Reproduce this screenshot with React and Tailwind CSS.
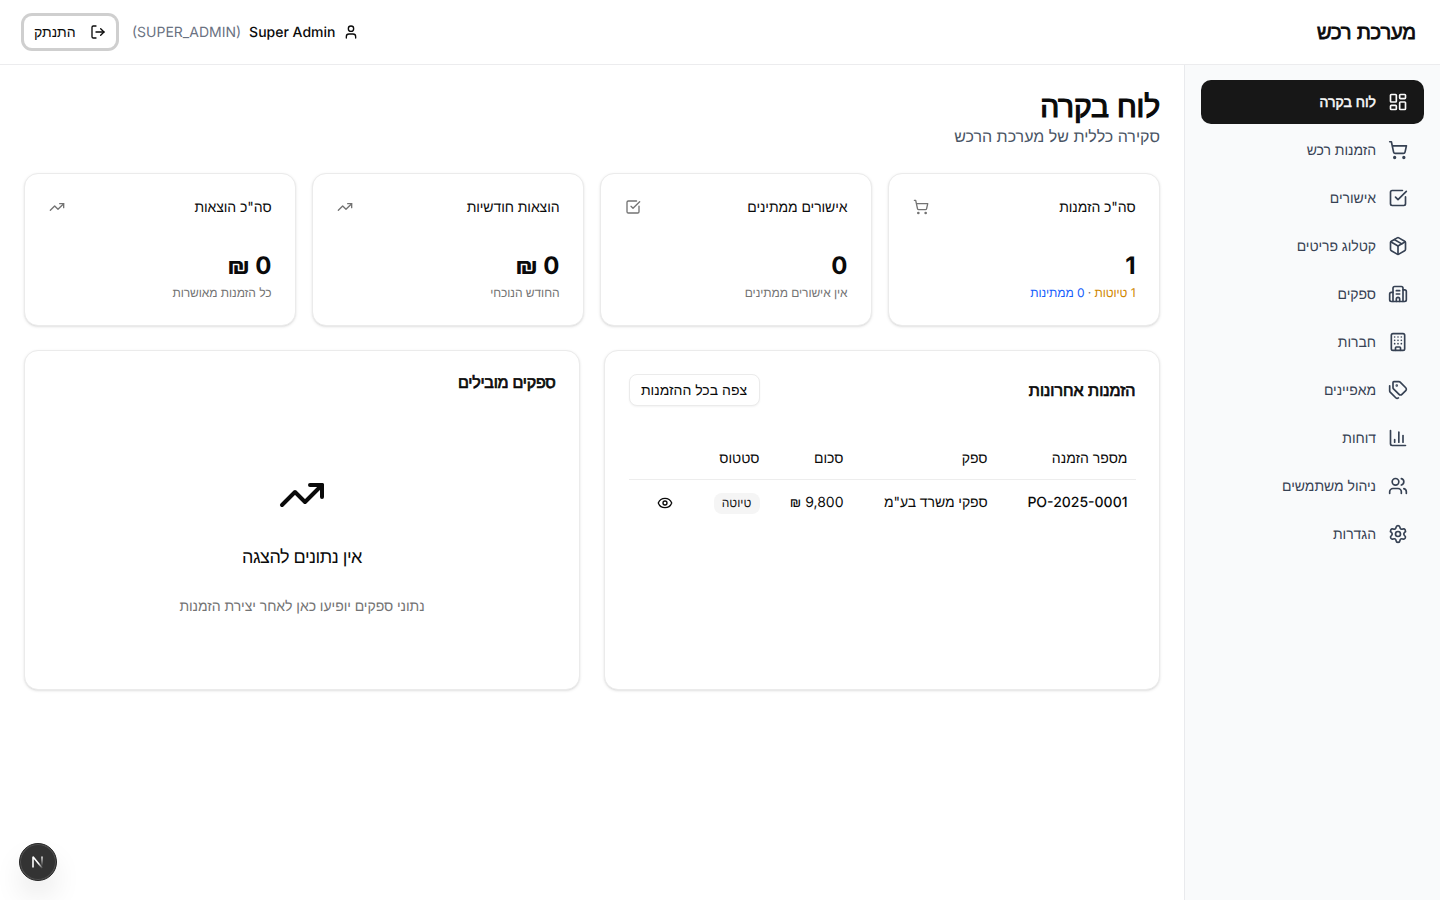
import {
  LayoutDashboard,
  ShoppingCart,
  SquareCheckBig,
  Package,
  Building2,
  Building,
  Tags,
  ChartColumn,
  Users,
  Settings,
  LogOut,
  User,
  TrendingUp,
  Eye,
} from 'lucide-react';

const NAV = [
  { label: 'לוח בקרה', icon: LayoutDashboard, active: true },
  { label: 'הזמנות רכש', icon: ShoppingCart },
  { label: 'אישורים', icon: SquareCheckBig },
  { label: 'קטלוג פריטים', icon: Package },
  { label: 'ספקים', icon: Building2 },
  { label: 'חברות', icon: Building },
  { label: 'מאפיינים', icon: Tags },
  { label: 'דוחות', icon: ChartColumn },
  { label: 'ניהול משתמשים', icon: Users },
  { label: 'הגדרות', icon: Settings },
];

const STATS = [
  {
    title: 'סה"כ הזמנות',
    icon: ShoppingCart,
    value: '1',
    note: (
      <>
        <span className="text-[#d08700]">1 טיוטות</span> · <span className="text-[#155dfc]">0 ממתינות</span>
      </>
    ),
  },
  { title: 'אישורים ממתינים', icon: SquareCheckBig, value: '0', note: 'אין אישורים ממתינים' },
  { title: 'הוצאות חודשיות', icon: TrendingUp, value: '0 ₪', note: 'החודש הנוכחי' },
  { title: 'סה"כ הוצאות', icon: TrendingUp, value: '0 ₪', note: 'כל הזמנות מאושרות' },
];

function Header() {
  return (
    <header className="flex h-[65px] shrink-0 items-center justify-between border-b border-[#ececee] bg-white px-6">
      <h1 className="text-xl font-normal tracking-[-0.1px] [-webkit-text-stroke:0.8px_currentColor]">מערכת רכש</h1>
      <div className="flex items-center gap-4">
        <div className="flex items-center gap-2 text-sm">
          <User className="size-4" />
          <span className="pt-px font-medium">Super Admin</span>
          <span dir="ltr" className="pt-px text-[#6a7282]">(SUPER_ADMIN)</span>
        </div>
        <button className="flex h-8 w-[92px] items-center justify-between rounded-lg bg-white px-2.5 text-sm ring-3 ring-[#cfcfcf]">
          <LogOut className="size-4" />
          התנתק
        </button>
      </div>
    </header>
  );
}

function Sidebar() {
  return (
    <aside className="w-64 shrink-0 border-l border-[#e9eaed] bg-[#f9fafb] px-4 pt-[15px]">
      <nav className="flex flex-col gap-1">
        {NAV.map(({ label, icon: Icon, active }) => (
          <a
            key={label}
            className={
              active
                ? 'flex h-11 items-center gap-3 rounded-[10px] bg-[#171717] px-4 text-sm text-[#fafafa] [&>span]:[-webkit-text-stroke:0.5px_currentColor]'
                : 'flex h-11 items-center gap-3 rounded-[10px] px-4 text-sm tracking-[-0.05px] text-[#364153]'
            }
          >
            <Icon className="size-5" />
            <span className="pt-px">{label}</span>
          </a>
        ))}
      </nav>
    </aside>
  );
}

function StatCard({ title, icon: Icon, value, note }) {
  return (
    <div className="flex h-[153px] flex-col rounded-[14px] border border-[#ebebeb] bg-white px-[23.5px] pt-[23px] shadow-sm">
      <div className="flex h-5 items-center justify-between">
        <h3 className="pt-px text-sm tracking-[-0.08px]">{title}</h3>
        <Icon className="size-4 text-[#737373]" />
      </div>
      <div className="mt-[33px] text-2xl font-bold">{value}</div>
      <p className="mt-[3px] text-xs tracking-[-0.07px] text-[#737373]">{note}</p>
    </div>
  );
}

function RecentOrders() {
  return (
    <section className="h-[340px] rounded-[14px] border border-[#ebebeb] bg-white px-[23.5px] pt-[23px] shadow-sm">
      <div className="flex items-center justify-between">
        <h3 className="text-base font-normal [-webkit-text-stroke:0.7px_currentColor]">הזמנות אחרונות</h3>
        <button className="h-8 w-[131px] rounded-lg border border-[#ebebeb] bg-white text-sm shadow-xs">
          צפה בכל ההזמנות
        </button>
      </div>
      <table className="mt-[33px] w-full table-fixed text-right text-sm">
        <colgroup>
          <col className="w-[140px]" />
          <col className="w-[144px]" />
          <col className="w-[84px]" />
          <col className="w-[77px]" />
          <col />
        </colgroup>
        <thead>
          <tr className="h-10 border-b border-[#ededed]">
            <th className="px-2 font-normal">מספר הזמנה</th>
            <th className="px-2 font-normal">ספק</th>
            <th className="px-2 font-normal">סכום</th>
            <th className="px-2 font-normal">סטטוס</th>
            <th />
          </tr>
        </thead>
        <tbody>
          <tr className="h-12">
            <td className="px-2 font-medium">PO-2025-0001</td>
            <td className="px-2 tracking-[-0.08px]">ספקי משרד בע"מ</td>
            <td className="px-2">9,800 ₪</td>
            <td className="px-2">
              <span className="inline-flex h-[21px] w-[46px] items-center justify-center rounded-lg bg-[#f5f5f5] align-middle text-xs text-[#171717]">
                טיוטה
              </span>
            </td>
            <td className="px-[17.5px]">
              <Eye className="size-4" />
            </td>
          </tr>
        </tbody>
      </table>
    </section>
  );
}

function TopSuppliers() {
  return (
    <section className="flex h-[340px] flex-col rounded-[14px] border border-[#ebebeb] bg-white px-[23.5px] pt-[23px] shadow-sm">
      <h3 className="text-base leading-4 font-normal tracking-[-0.25px] [-webkit-text-stroke:0.7px_currentColor]">ספקים מובילים</h3>
      <div className="flex flex-col items-center pt-[81px] text-center">
        <TrendingUp className="size-12" />
        <p className="mt-[25px] text-lg tracking-[-0.5px]">אין נתונים להצגה</p>
        <p className="mt-[25px] text-sm tracking-[-0.05px] text-[#737373]">נתוני ספקים יופיעו כאן לאחר יצירת הזמנות</p>
      </div>
    </section>
  );
}

function DevBadge() {
  return (
    <div className="fixed bottom-[19px] left-[19px] flex size-[38px] items-center justify-center rounded-full border border-[#262626] bg-[#333333] shadow-[0_16px_32px_-8px_rgba(0,0,0,0.24)] ring-1 ring-white/15 ring-inset">
      <svg width="14" height="14" viewBox="0 0 14 14" fill="none">
        <defs>
          <linearGradient id="diagonal" x1="8" y1="8" x2="12" y2="13" gradientUnits="userSpaceOnUse">
            <stop stopColor="#fff" />
            <stop offset="1" stopColor="#fff" stopOpacity="0" />
          </linearGradient>
          <linearGradient id="stem" x1="11" y1="1" x2="11" y2="11" gradientUnits="userSpaceOnUse">
            <stop stopColor="#fff" />
            <stop offset="1" stopColor="#fff" stopOpacity="0" />
          </linearGradient>
        </defs>
        <path d="M2 12.5V1.8L11.4 13.2" stroke="url(#diagonal)" strokeWidth="1.6" strokeLinejoin="bevel" />
        <path d="M11 1.5v9.5" stroke="url(#stem)" strokeWidth="1.5" />
      </svg>
    </div>
  );
}

export default function App() {
  return (
    <div
      dir="rtl"
      className="flex h-screen flex-col overflow-hidden bg-white font-[Inter,'Liberation_Sans',sans-serif] text-[#0a0a0a] antialiased [text-rendering:geometricPrecision]"
    >
      <Header />
      <div className="flex min-h-0 flex-1">
        <Sidebar />
        <main className="flex min-w-0 flex-1 flex-col gap-6 px-6 pt-[23px]">
          <div>
            <h2 className="text-3xl leading-[38px] font-normal tracking-[-0.15px] [-webkit-text-stroke:1.2px_currentColor]">לוח בקרה</h2>
            <p className="-mt-0.5 text-base text-[#4a5565]">סקירה כללית של מערכת הרכש</p>
          </div>
          <div className="mt-px grid grid-cols-4 gap-4">
            {STATS.map((stat) => (
              <StatCard key={stat.title} {...stat} />
            ))}
          </div>
          <div className="grid grid-cols-2 gap-6">
            <RecentOrders />
            <TopSuppliers />
          </div>
        </main>
      </div>
      <DevBadge />
    </div>
  );
}
